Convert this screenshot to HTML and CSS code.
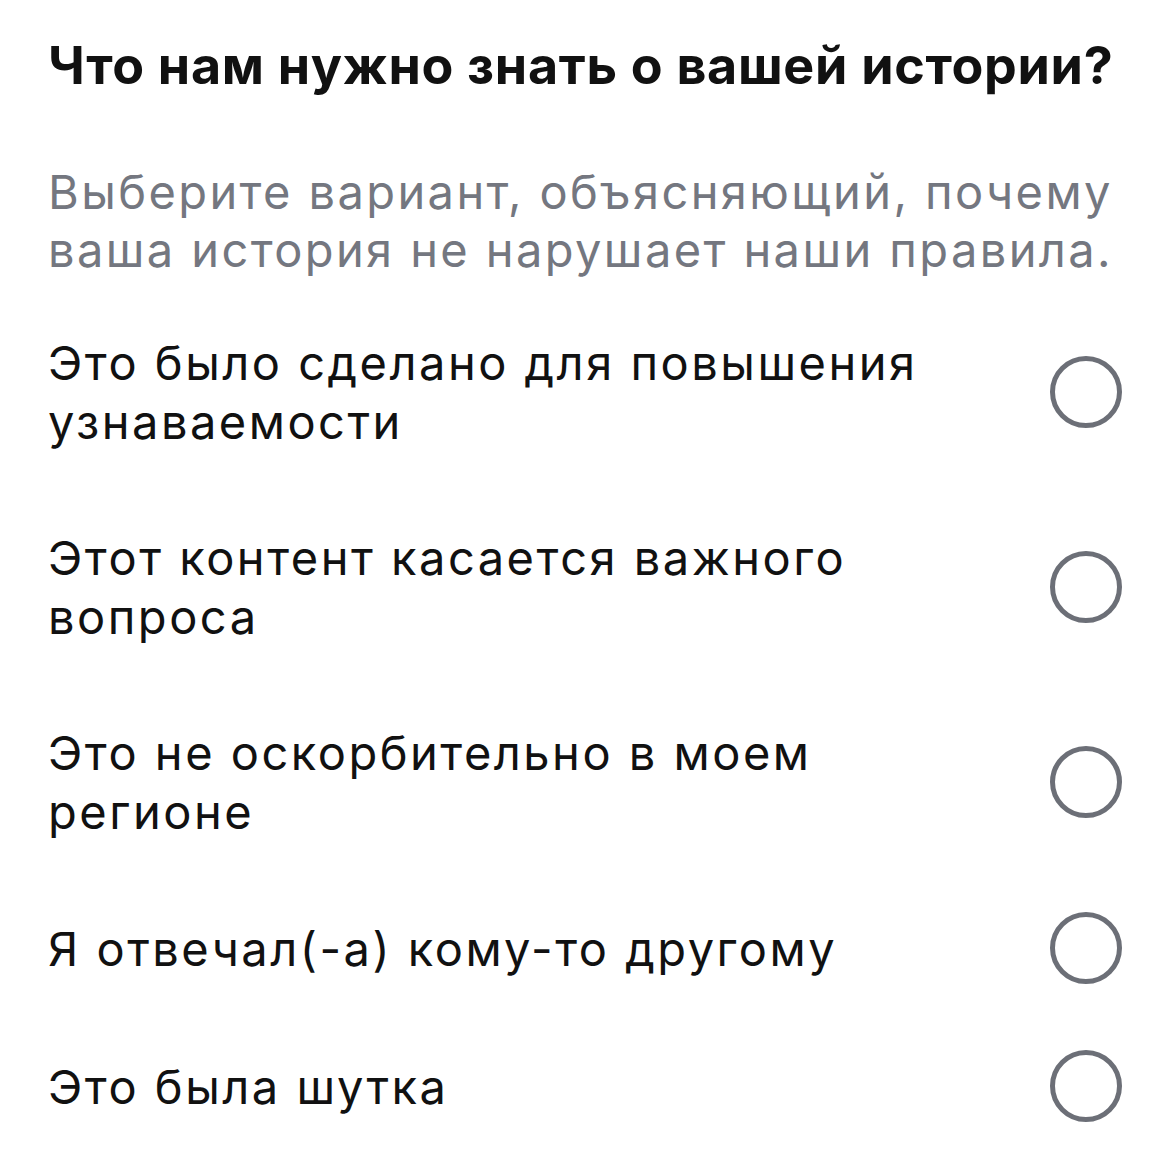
FILE: index.html
```html
<!DOCTYPE html>
<html lang="ru">
<head>
    <meta charset="UTF-8">
    <meta name="viewport" content="width=device-width, initial-scale=1.0">
    <title>Пожаловаться</title>
    <link rel="stylesheet" href="styles.css">
</head>
<body>
    <div class="appeal-container">
        <h1>Что нам нужно знать о вашей истории?</h1>
        <p class="subtitle">Выберите вариант, объясняющий, почему ваша история не нарушает наши правила.</p>

        <div class="options">
            <label class="option">
                <span class="option-text">Это было сделано для повышения узнаваемости</span>
                <input type="radio" name="reason">
                <span class="radio"></span>
            </label>
            <label class="option">
                <span class="option-text">Этот контент касается важного вопроса</span>
                <input type="radio" name="reason">
                <span class="radio"></span>
            </label>
            <label class="option">
                <span class="option-text">Это не оскорбительно в моем регионе</span>
                <input type="radio" name="reason">
                <span class="radio"></span>
            </label>
            <label class="option">
                <span class="option-text">Я отвечал(-а) кому-то другому</span>
                <input type="radio" name="reason">
                <span class="radio"></span>
            </label>
            <label class="option">
                <span class="option-text">Это была шутка</span>
                <input type="radio" name="reason">
                <span class="radio"></span>
            </label>
        </div>
    </div>
</body>
</html>
```

FILE: styles.css
```css
body {
    font-family: Inter, Roboto, "Noto Sans", Arial, sans-serif;
    margin: 0;
    background-color: #fff;
    color: #111;
}

.appeal-container {
    padding: 35px 48px 0 48px;
}

.appeal-container h1 {
    font-size: 52px;
    font-weight: 700;
    line-height: 62px;
    letter-spacing: 0.7px;
    margin: 0 0 66px 0;
    color: #111;
}

.subtitle {
    font-size: 47px;
    line-height: 58px;
    letter-spacing: 2.4px;
    color: #747780;
    margin: 0 0 15px 0;
}

.options {
    display: flex;
    flex-direction: column;
}

.option {
    display: flex;
    align-items: center;
    justify-content: space-between;
    gap: 60px;
    padding: 33px 0;
    cursor: pointer;
}

.option-text {
    flex: 1;
    padding: 5.5px 0;
    font-size: 47px;
    line-height: 59px;
    letter-spacing: 2.5px;
    color: #111;
}

.option input {
    display: none;
}

.radio {
    width: 62px;
    height: 62px;
    border: 5px solid #6c6f77;
    border-radius: 50%;
    flex-shrink: 0;
}

.option input:checked + .radio {
    border-color: #0095f6;
}
```
